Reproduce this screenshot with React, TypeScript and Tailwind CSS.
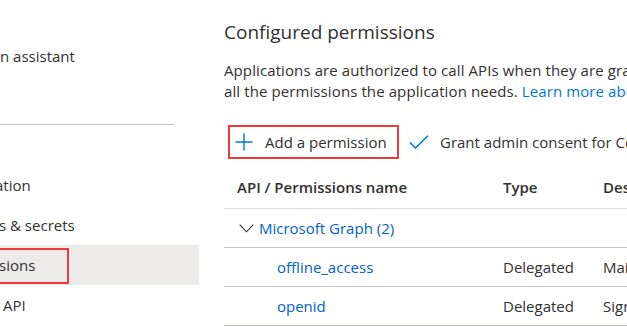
import React from "react";

function PlusIcon() {
  return (
    <svg width="18" height="18" viewBox="0 0 18 18" className="shrink-0">
      <path d="M9 0.5V17.5M0.5 9H17.5" stroke="#0078d4" strokeWidth="1.4" fill="none" />
    </svg>
  );
}

function CheckIcon() {
  return (
    <svg width="20" height="14" viewBox="0 0 20 14" className="shrink-0">
      <path d="M1 7.5L6.5 13L19 0.8" stroke="#0078d4" strokeWidth="1.6" fill="none" />
    </svg>
  );
}

function Chevron() {
  return (
    <svg width="15" height="9" viewBox="0 0 15 9" className="shrink-0">
      <path d="M0.7 0.7L7.5 7.8L14.3 0.7" stroke="#323130" strokeWidth="1.1" fill="none" />
    </svg>
  );
}

export default function App() {
  return (
    <div className="w-[627px] h-[326px] overflow-hidden bg-white flex text-[#323130] font-['Open_Sans',sans-serif]">
      {/* Left nav */}
      <div className="w-[199px] shrink-0 flex flex-col overflow-hidden text-[15px]">
        <div className="mt-[36px] h-10 flex items-center whitespace-nowrap">n assistant</div>
        <div className="mt-[48px] h-px w-[174px] bg-[#c8c6c4]" />
        <div className="mt-[40px] h-10 flex items-center whitespace-nowrap">
          <span className="ml-[-5px]">ation</span>
        </div>
        <div className="h-10 flex items-center whitespace-nowrap">
          <span className="ml-[-1px]">s &amp; secrets</span>
        </div>
        <div className="relative h-10 flex items-center whitespace-nowrap bg-[#edebe9]">
          <span className="ml-[-1px]">sions</span>
          <div className="absolute left-[-4px] top-[3px] w-[73px] h-[36px] border-2 border-[#f03a3a]" />
        </div>
        <div className="h-10 flex items-center whitespace-nowrap">
          <span className="ml-[3px]">API</span>
        </div>
      </div>

      {/* Right content */}
      <div className="flex-1 min-w-0 pl-[25px] flex flex-col overflow-hidden">
        <div className="mt-[18px] text-[19px] leading-[28px] whitespace-nowrap">Configured permissions</div>
        <div className="mt-[14px] text-[15px] leading-[21px] tracking-[0.1px] whitespace-nowrap">
          <div>
            Applications are authorized to call APIs when they are granted permissions by users/admins as part of the consent process.
          </div>
          <div>
            all the permissions the application needs.{" "}
            <span className="text-[#0078d4]">Learn more about permissions and consent</span>
          </div>
        </div>

        <div className="mt-[23px] ml-[4px] flex items-center whitespace-nowrap text-[15px]">
          <div className="shrink-0 w-[171px] h-[34px] border-2 border-[#f03a3a] flex items-center pl-[5px] gap-[12px]">
            <PlusIcon />
            <span>Add a permission</span>
          </div>
          <div className="shrink-0 ml-[10px] flex items-center gap-[11px]">
            <CheckIcon />
            <span>Grant admin consent for Contoso</span>
          </div>
        </div>

        <div className="mt-[8px] text-[15px] whitespace-nowrap">
          <div className="h-[42px] flex items-center border-b border-[#e1dfdd] font-semibold">
            <div className="shrink-0 w-[279px] pl-[13px]">API / Permissions name</div>
            <div className="shrink-0 w-[100px]">Type</div>
            <div className="shrink-0">Description</div>
          </div>
          <div className="h-[39px] flex items-center border-b border-[#c8c6c4]">
            <div className="pl-[15px] flex items-center gap-[5px]">
              <Chevron />
              <span className="text-[#0062cc]">Microsoft Graph (2)</span>
            </div>
          </div>
          <div className="h-[39px] flex items-center border-b border-[#c8c6c4]">
            <div className="shrink-0 w-[279px] pl-[53px] text-[#0062cc]">offline_access</div>
            <div className="shrink-0 w-[100px]">Delegated</div>
            <div className="shrink-0">Maintain access to data you have given it access to</div>
          </div>
          <div className="h-[39px] flex items-center border-b border-[#c8c6c4]">
            <div className="shrink-0 w-[279px] pl-[53px] text-[#0062cc]">openid</div>
            <div className="shrink-0 w-[100px]">Delegated</div>
            <div className="shrink-0">Sign users in</div>
          </div>
        </div>
      </div>
    </div>
  );
}
